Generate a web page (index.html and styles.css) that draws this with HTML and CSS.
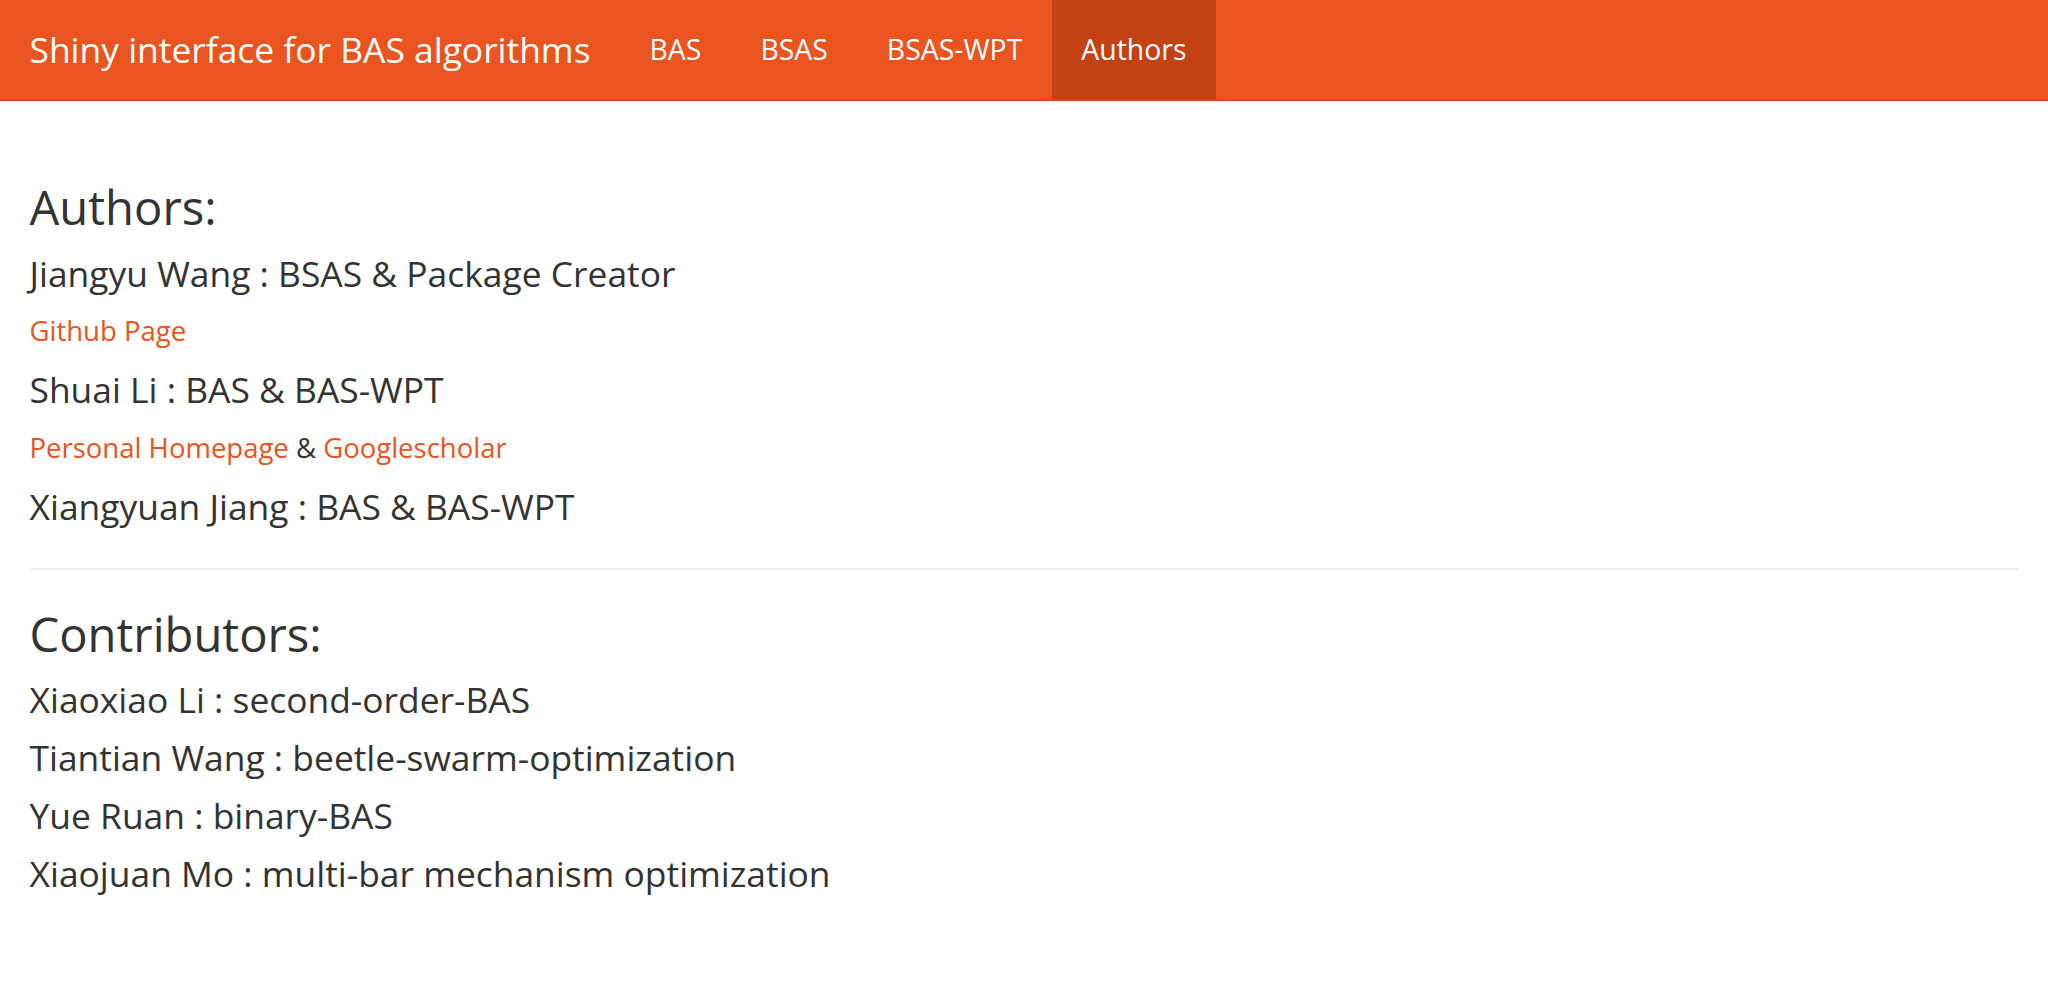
FILE: index.html
```html
<!DOCTYPE html>
<html lang="en">
<head>
<meta charset="utf-8">
<title>Shiny interface for BAS algorithms</title>
<link rel="stylesheet" href="styles.css">
</head>
<body>
<nav class="navbar">
  <div class="navbar-inner">
    <span class="brand">Shiny interface for BAS algorithms</span>
    <ul class="nav">
      <li><a href="#">BAS</a></li>
      <li><a href="#">BSAS</a></li>
      <li><a href="#">BSAS-WPT</a></li>
      <li class="active"><a href="#">Authors</a></li>
    </ul>
  </div>
</nav>
<main class="container">
  <h3>Authors:</h3>
  <h4>Jiangyu Wang : BSAS &amp; Package Creator</h4>
  <p><a href="#">Github Page</a></p>
  <h4>Shuai Li : BAS &amp; BAS-WPT</h4>
  <p><a href="#">Personal Homepage</a> &amp; <a href="#">Googlescholar</a></p>
  <h4>Xiangyuan Jiang : BAS &amp; BAS-WPT</h4>
  <hr>
  <h3>Contributors:</h3>
  <h4>Xiaoxiao Li : second-order-BAS</h4>
  <h4>Tiantian Wang : beetle-swarm-optimization</h4>
  <h4>Yue Ruan : binary-BAS</h4>
  <h4>Xiaojuan Mo : multi-bar mechanism optimization</h4>
</main>
</body>
</html>
```
FILE: styles.css
```css
html, body {
  margin: 0;
  padding: 0;
  background: #ffffff;
}
body {
  font-family: "Open Sans", "Noto Sans", sans-serif;
  font-size: 27.5px;
  line-height: 1.42857;
  color: #333333;
}
.navbar {
  background: #e95420;
  border-bottom: 2px solid #d34a19;
  margin-bottom: 81px;
}
.navbar-inner {
  display: flex;
  align-items: stretch;
  height: 99px;
  padding: 0 29.5px;
}
.brand {
  display: flex;
  align-items: center;
  font-size: 35.4px;
  color: #ffffff;
  padding-right: 29.5px;
  white-space: nowrap;
}
.nav {
  display: flex;
  list-style: none;
  margin: 0;
  padding: 0;
}
.nav li {
  display: flex;
}
.nav a {
  display: flex;
  align-items: center;
  padding: 0 29.5px;
  color: #ffffff;
  text-decoration: none;
  font-size: 28.4px;
  white-space: nowrap;
}
.nav li.active a {
  background: #c34113;
}
.container {
  padding: 0 29.5px;
}
h3, h4 {
  font-weight: 400;
  line-height: 1.1;
  color: #333333;
}
h3 {
  font-size: 47.2px;
  margin: 39.3px 0 19.65px;
}
h4 {
  font-size: 35.4px;
  line-height: 38.5px;
  margin: 19.3px 0;
}
p {
  margin: 0 0 19.65px;
}
a {
  color: #e95420;
  text-decoration: none;
}
hr {
  border: 0;
  border-top: 2px solid #eeeeee;
  margin: 42px 0 39.3px;
}
```
